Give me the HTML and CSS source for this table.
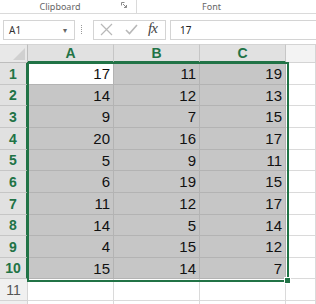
FILE: index.html
```html
<!DOCTYPE html>
<html lang="en">
<head>
    <meta charset="UTF-8">
    <title>Sheet1</title>
    <link rel="stylesheet" href="styles.css">
</head>
<body>
    <div class="ribbon">
        <div class="group clipboard">
            <span>Clipboard</span>
            <svg class="launcher" width="6" height="6" viewBox="0 0 6 6"><path d="M0.5 0.5h3M0.5 0.5v3M2 2l3.5 3.5M5.5 3v2.5H3" stroke="#8a8a8a" fill="none" stroke-width="1"/></svg>
        </div>
        <div class="group font"><span>Font</span></div>
    </div>

    <div class="formula-bar">
        <div class="name-box">
            <span>A1</span>
            <span class="arrow">&#9662;</span>
        </div>
        <div class="grip"></div>
        <div class="fx-box">
            <svg class="cancel" width="13" height="13" viewBox="0 0 13 13"><path d="M1 1L12 12M12 1L1 12" stroke="#b8b8b8" stroke-width="1.2"/></svg>
            <svg class="enter" width="13" height="13" viewBox="0 0 13 13"><path d="M1 7L4.5 10.5L12 2" stroke="#b8b8b8" stroke-width="1.6" fill="none"/></svg>
            <span class="fx">fx</span>
        </div>
        <div class="formula-input">17</div>
    </div>

    <div class="sheet">
        <div class="corner"></div>
        <div class="col-head sel">A</div>
        <div class="col-head sel">B</div>
        <div class="col-head sel">C</div>
        <div class="col-head"></div>

        <div class="row-head sel">1</div><div class="cell active">17</div><div class="cell">11</div><div class="cell">19</div><div class="cell empty"></div>
        <div class="row-head sel">2</div><div class="cell">14</div><div class="cell">12</div><div class="cell">13</div><div class="cell empty"></div>
        <div class="row-head sel">3</div><div class="cell">9</div><div class="cell">7</div><div class="cell">15</div><div class="cell empty"></div>
        <div class="row-head sel">4</div><div class="cell">20</div><div class="cell">16</div><div class="cell">17</div><div class="cell empty"></div>
        <div class="row-head sel">5</div><div class="cell">5</div><div class="cell">9</div><div class="cell">11</div><div class="cell empty"></div>
        <div class="row-head sel">6</div><div class="cell">6</div><div class="cell">19</div><div class="cell">15</div><div class="cell empty"></div>
        <div class="row-head sel">7</div><div class="cell">11</div><div class="cell">12</div><div class="cell">17</div><div class="cell empty"></div>
        <div class="row-head sel">8</div><div class="cell">14</div><div class="cell">5</div><div class="cell">14</div><div class="cell empty"></div>
        <div class="row-head sel">9</div><div class="cell">4</div><div class="cell">15</div><div class="cell">12</div><div class="cell empty"></div>
        <div class="row-head sel">10</div><div class="cell">15</div><div class="cell">14</div><div class="cell">7</div><div class="cell empty"></div>
        <div class="row-head">11</div><div class="cell empty"></div><div class="cell empty"></div><div class="cell empty"></div><div class="cell empty"></div>
        <div class="row-head"></div><div class="cell empty"></div><div class="cell empty"></div><div class="cell empty"></div><div class="cell empty"></div>

        <div class="selection"><div class="handle"></div></div>
    </div>
</body>
</html>
```

FILE: styles.css
```css
body {
    margin: 0;
    width: 316px;
    height: 304px;
    overflow: hidden;
    background: #fff;
    font-family: 'Liberation Sans', Arial, sans-serif;
    color: #222;
}
.ribbon {
    display: flex;
    height: 13px;
    border-bottom: 1px solid #dadada;
    font-family: 'Noto Sans', sans-serif;
    font-size: 9px;
    color: #666;
}
.ribbon .group {
    display: flex;
    align-items: center;
    justify-content: center;
    position: relative;
}
.ribbon .clipboard {
    width: 136px;
    border-right: 1px solid #dadada;
    margin-top: -4px;
    padding-top: 4px;
}
.ribbon .clipboard span {
    margin-left: -16px;
}
.ribbon .launcher {
    position: absolute;
    right: 9px;
    top: 6px;
}
.ribbon .font {
    flex: 1;
    margin-left: -30px;
}
.formula-bar {
    display: flex;
    align-items: center;
    height: 21px;
    margin-top: 5px;
    font-family: 'Noto Sans', sans-serif;
    font-size: 10px;
}
.name-box {
    display: flex;
    justify-content: space-between;
    align-items: center;
    width: 58px;
    height: 18px;
    margin-left: 3px;
    padding: 0 7px 0 5px;
    border: 1px solid #d4d4d4;
    color: #333;
}
.name-box .arrow {
    font-size: 8px;
    color: #666;
}
.grip {
    width: 1px;
    height: 9px;
    margin: 0 10px 0 6px;
    border-left: 1px dotted #999;
}
.fx-box {
    display: flex;
    align-items: center;
    width: 62px;
    height: 18px;
    padding: 0 3px 0 6px;
    border: 1px solid #d4d4d4;
}
.fx-box .enter {
    margin-left: 12px;
}
.fx-box .fx {
    margin-left: 10px;
    font-family: 'Liberation Serif', serif;
    font-style: italic;
    font-size: 15px;
    color: #444;
    letter-spacing: -1px;
    margin-top: -2px;
}
.formula-input {
    flex: 1;
    height: 18px;
    margin-left: 4px;
    padding-left: 9px;
    line-height: 18px;
    border: 1px solid #d4d4d4;
    border-right: none;
    color: #222;
}
.sheet {
    position: relative;
    display: grid;
    grid-template-columns: 28px 86px 86px 86px 1fr;
    grid-template-rows: 19px 22px 21px 22px 22px 21px 22px 22px 21px 22px 21px 22px 22px;
    margin-top: 4px;
}
.corner {
    background: #e8e8e8;
    border-top: 1px solid #d4d4d4;
    border-right: 1px solid #bdbdbd;
    border-bottom: 1px solid #bdbdbd;
    position: relative;
    overflow: hidden;
}
.corner::after {
    content: '';
    position: absolute;
    right: 2px;
    bottom: 2px;
    border-left: 12px solid transparent;
    border-bottom: 12px solid #d0d0d0;
}
.col-head {
    display: flex;
    align-items: center;
    justify-content: center;
    background: #f3f3f3;
    border-top: 1px solid #d4d4d4;
    border-right: 1px solid #d4d4d4;
    border-bottom: 1px solid #d4d4d4;
    font-size: 14px;
}
.col-head.sel {
    background: #e1e1e1;
    border-right-color: #c6c6c6;
    border-bottom: 2px solid #217346;
    color: #217346;
    font-weight: bold;
}
.row-head {
    display: flex;
    align-items: center;
    justify-content: center;
    background: #f0f0f0;
    border-right: 1px solid #d4d4d4;
    border-bottom: 1px solid #d4d4d4;
    font-size: 14px;
    color: #555;
}
.row-head.sel {
    background: #e1e1e1;
    border-right: 2px solid #217346;
    border-bottom-color: #c6c6c6;
    color: #217346;
    font-weight: bold;
}
.cell {
    display: flex;
    align-items: center;
    justify-content: flex-end;
    padding-right: 3px;
    background: #c6c6c6;
    border-right: 1px solid #b3b3b3;
    border-bottom: 1px solid #b3b3b3;
    font-size: 15px;
    color: #111;
}
.cell.active {
    background: #fff;
}
.cell.empty {
    background: #fff;
    border-color: #dadada;
}
.selection {
    position: absolute;
    left: 27px;
    top: 18px;
    width: 258px;
    height: 216px;
    border: 2px solid #217346;
    pointer-events: none;
}
.handle {
    position: absolute;
    right: -4px;
    bottom: -4px;
    width: 5px;
    height: 5px;
    background: #217346;
    border: 1px solid #fff;
}
```
